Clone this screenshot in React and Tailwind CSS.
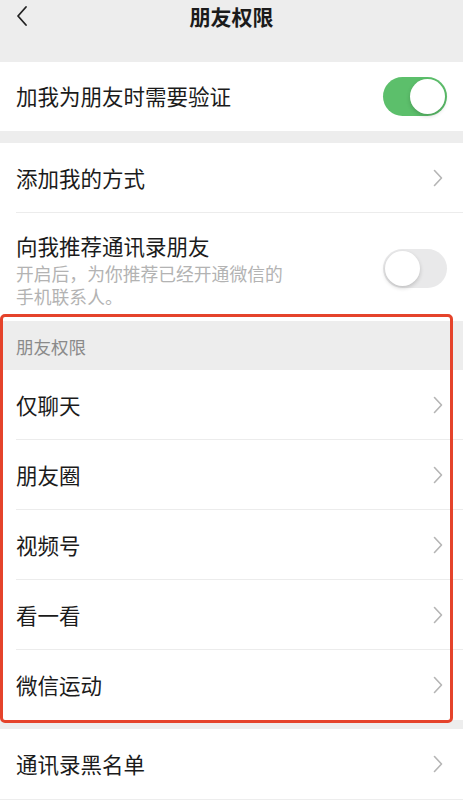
import React from 'react';

const font = { fontFamily: '"Noto Sans CJK SC", "Noto Sans", sans-serif' };

const Chevron = () => (
    <svg width="10" height="18" viewBox="0 0 10 18" className="shrink-0">
        <path d="M1.5 1.5 L8.5 9 L1.5 16.5" fill="none" stroke="#b5b5b5" strokeWidth="1.6" strokeLinecap="round" strokeLinejoin="round" />
    </svg>
);

const Toggle = ({ on }) => (
    <div
        className={`w-[64px] h-[39px] rounded-full flex items-center px-[2px] shrink-0 ${
            on ? 'bg-[#5cbf6b] justify-end' : 'bg-[#e9e9ea] justify-start'
        }`}
    >
        <div className="w-[35px] h-[35px] rounded-full bg-white shadow-[0_2px_4px_rgba(0,0,0,0.18)]" />
    </div>
);

const Row = ({ label, divider = true }) => (
    <div className="h-[70px] flex items-center pl-4 pr-[20px] relative">
        <span className="flex-1 text-[21.5px] text-[#1b1b1b]">{label}</span>
        <Chevron />
        {divider && <div className="absolute bottom-0 left-4 right-0 h-px bg-[#ececec]" />}
    </div>
);

export default function App() {
    return (
        <div className="w-[463px] h-[800px] overflow-hidden bg-[#ededed]" style={font}>
            {/* nav */}
            <div className="h-[62px] relative">
                <svg width="14" height="22" viewBox="0 0 14 22" className="absolute left-[15px] top-[5px]">
                    <path d="M11 2 L3 11 L11 20" fill="none" stroke="#222" strokeWidth="1.8" strokeLinecap="round" strokeLinejoin="round" />
                </svg>
                <div className="absolute top-0 left-0 right-0 text-center text-[21px] font-bold text-[#1b1b1b] leading-[32px]">
                    朋友权限
                </div>
            </div>

            <div className="bg-white h-[69px] flex items-center pl-4 pr-[16px]">
                <span className="flex-1 text-[21.5px] text-[#1b1b1b]">加我为朋友时需要验证</span>
                <Toggle on />
            </div>

            <div className="h-[12px]" />

            <div className="bg-white">
                <Row label="添加我的方式" />
                <div className="h-[108px] flex items-start pl-4 pr-[16px]">
                    <div className="flex-1 pt-[17px]">
                        <div className="text-[21.5px] text-[#1b1b1b] leading-[32px]">向我推荐通讯录朋友</div>
                        <div className="text-[17.8px] text-[#b3b3b3] leading-[23px] w-[275px]">
                            开启后，为你推荐已经开通微信的手机联系人。
                        </div>
                    </div>
                    <div className="pt-[36px]">
                        <Toggle />
                    </div>
                </div>
            </div>

            <div className="relative">
                <div className="h-[49px] flex items-center pl-4 text-[17.5px] text-[#8a8a8a] pt-[4px]">朋友权限</div>
                <div className="bg-white">
                    <Row label="仅聊天" />
                    <Row label="朋友圈" />
                    <Row label="视频号" />
                    <Row label="看一看" />
                    <Row label="微信运动" divider={false} />
                </div>
                <div className="absolute -top-[7px] left-0 w-[453px] bottom-[-3px] border-[3px] border-[#e5432b] rounded-[5px] pointer-events-none" />
            </div>

            <div className="h-[9px]" />

            <div className="bg-white">
                <Row label="通讯录黑名单" divider={false} />
            </div>
        </div>
    );
}
